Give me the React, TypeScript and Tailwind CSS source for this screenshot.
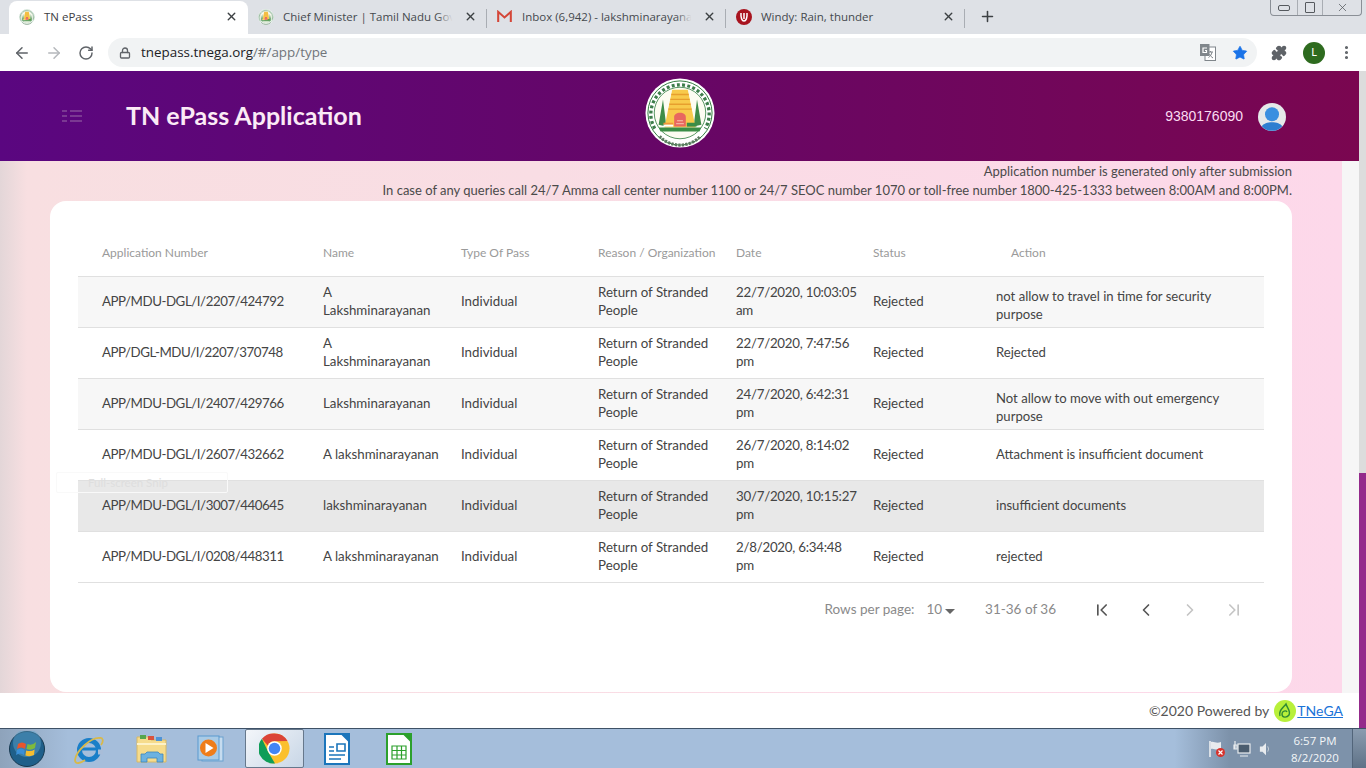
import React from 'react';
import { ArrowLeft, ArrowRight, ChevronFirst, ChevronLast, ChevronLeft, ChevronRight, Lock, MoreVertical, Plus, Puzzle, RotateCw, Star, X } from 'lucide-react';

const rows = [
	['APP/MDU-DGL/I/2207/424792', 'A\nLakshminarayanan', '22/7/2020, 10:03:05\nam', 'not allow to travel in time for security\npurpose'],
	['APP/DGL-MDU/I/2207/370748', 'A\nLakshminarayanan', '22/7/2020, 7:47:56\npm', 'Rejected'],
	['APP/MDU-DGL/I/2407/429766', 'Lakshminarayanan', '24/7/2020, 6:42:31\npm', 'Not allow to move with out emergency\npurpose'],
	['APP/MDU-DGL/I/2607/432662', 'A lakshminarayanan', '26/7/2020, 8:14:02\npm', 'Attachment is insufficient document'],
	['APP/MDU-DGL/I/3007/440645', 'lakshminarayanan', '30/7/2020, 10:15:27\npm', 'insufficient documents'],
	['APP/MDU-DGL/I/0208/448311', 'A lakshminarayanan', '2/8/2020, 6:34:48\npm', 'rejected'],
];

const cols = 'grid grid-cols-[221px_138px_137px_138px_137px_123px_1fr] pl-6 items-center';

const Seal: React.FC<{ className?: string }> = ({ className }) => (
	<svg viewBox="0 0 72 72" className={className}>
		<circle cx="36" cy="36" r="35.5" fill="#fff" />
		<circle cx="36" cy="36" r="33" fill="none" stroke="#2c7a3a" strokeWidth="1" />
		<path d="M10 52 A30 30 0 1 1 62 52" fill="none" stroke="#3d7d4a" strokeWidth="3.4" strokeDasharray="3 2.4" />
		<circle cx="36" cy="36" r="26.5" fill="#fdfcf2" stroke="#2c7a3a" strokeWidth="0.8" />
		<path d="M14 48 L18.5 22 L22 50 Z M58 48 L53.5 22 L50 50 Z" fill="#3f8c48" />
		<path d="M28 12 H44 L52 51 H20 Z" fill="#f8ca4c" />
		<path d="M27 17 H45 M26 22 H46 M25 27 H47 M24 32 H48" stroke="#e79f2e" strokeWidth="1.4" />
		<path d="M30 41 C29 34 43 34 42 41 L42 50 L30 50 Z" fill="#e8675f" />
		<path d="M33 44 H39 M32 47 H40" stroke="#f7c6b4" strokeWidth="1" />
		<path d="M14 51 H58 L56 55 H16 Z" fill="#3b8d46" />
		<path d="M19 46 H29 V48 H19 Z" fill="#f0963a" />
		<path d="M19 48 H29 V50 H19 Z" fill="#fff" />
		<path d="M43 46 H53 V50 H43 Z" fill="#3b8d46" />
		<path d="M15 60 A29 29 0 0 0 57 60" fill="none" stroke="#5c7a60" strokeWidth="3.2" strokeDasharray="2.4 1.2" />
	</svg>
);

const Tab: React.FC<{ icon: React.ReactNode; title: string; active?: boolean; fade?: boolean; sep?: boolean }> = ({ icon, title, active, fade, sep }) => (
	<div className={`relative flex h-[33px] w-[239px] items-center pb-[2px] pl-[10px] pr-[10px] text-[11.5px] ${active ? 'rounded-t-lg bg-white text-[#3c4043]' : 'text-[#45494e]'}`}>
		<div className="flex w-[25px] shrink-0 items-center">{icon}</div>
		<span className="min-w-0 flex-1 whitespace-nowrap">{title}</span>
		{fade && <span className="absolute right-[24px] top-0 h-full w-[26px] bg-[linear-gradient(90deg,transparent,#dee1e6_60%)]" />}
		<X size={13} strokeWidth={2.6} className="relative ml-[8px] shrink-0 text-[#3c4043]" />
		{sep && <span className="absolute right-0 top-[8px] h-[19px] w-px bg-[#a9adb3]" />}
	</div>
);

const Gmail = () => (
	<svg viewBox="0 0 16 14" className="h-[13px] w-[15px]">
		<path d="M1.2 13 V2 L8 8 L14.8 2 V13" fill="none" stroke="#d44638" strokeWidth="2.2" />
	</svg>
);

const Windy = () => (
	<svg viewBox="0 0 16 16" className="h-[16px] w-[16px]">
		<circle cx="8" cy="8" r="8" fill="#a8141f" />
		<path d="M5 4 C4.6 9 6 12 8 12 C10 12 11.4 9 11 4 M8 4 V10" fill="none" stroke="#fff" strokeWidth="1.5" />
	</svg>
);

const Translate = () => (
	<svg viewBox="0 0 16 17" className="h-[17px] w-[16px]">
		<rect x="5" y="3" width="10.5" height="13.5" fill="#fff" stroke="#80868b" />
		<rect x="0" y="0" width="9.5" height="12" fill="#80868b" />
		<path d="M7 4 H3 V8.5 H6.5 V6.5 H5" fill="none" stroke="#fff" strokeWidth="1.2" />
		<path d="M8 8 H13 M10.5 7 V8 M12 8 C11.5 11 10 12.5 8.5 13.5 M9.5 10 C10 11.5 11.5 13 13 14" fill="none" stroke="#80868b" />
	</svg>
);

const ListIcon = () => (
	<svg viewBox="0 0 20 12" className="h-[12px] w-[20px]" stroke="#9a6aa8" strokeWidth="1">
		<path d="M0 1 H5 M8 1 H20 M0 6 H5 M8 6 H20 M0 11 H5 M8 11 H20" />
	</svg>
);

const Avatar = () => (
	<svg viewBox="0 0 30 30" className="h-[30px] w-[28px]">
		<circle cx="15" cy="15" r="15" fill="#e6e9ea" />
		<circle cx="15" cy="12" r="7.5" fill="#3a8fe0" />
		<path d="M4 25 C7 19 23 19 26 25 A15 15 0 0 1 4 25 Z" fill="#2f7fd0" />
	</svg>
);

const TnegaLogo = () => (
	<svg viewBox="0 0 22 22" className="h-[22px] w-[22px]">
		<circle cx="11" cy="11" r="11" fill="#b8f03a" />
		<path d="M6 16 C4 11 9 8 12 4 C13 8 17 11 15 15 C13 18 8 18 8 14 C8 11 12 10 13 12" fill="none" stroke="#2f8a34" strokeWidth="1.4" />
	</svg>
);

const Orb = () => (
	<svg viewBox="0 0 36 36" className="h-[36px] w-[36px]">
		<circle cx="18" cy="18" r="17.5" fill="#1f5f8a" stroke="#17384f" />
		<circle cx="18" cy="12" r="14" fill="#5fa7cf" opacity="0.45" />
		<path d="M9 13 Q13 10 17 13 L16 18 Q12 15 8 18 Z" fill="#e8552c" />
		<path d="M18.5 13 Q23 15 27 11 L26 17 Q22 20 17.5 18 Z" fill="#7fba3c" />
		<path d="M8 19 Q12 16 15.6 19 L15 24 Q11 21 7 24 Z" fill="#3a8fd8" />
		<path d="M17.2 19.5 Q22 21 25.6 18.5 L25 24 Q21 26 16.4 24.5 Z" fill="#f5bd2f" />
	</svg>
);

const IeIcon = () => (
	<svg viewBox="0 0 32 32" className="h-[32px] w-[32px]">
		<circle cx="16" cy="17" r="9.5" fill="none" stroke="#1a7fc8" strokeWidth="5" />
		<path d="M9 16 H24" stroke="#1a7fc8" strokeWidth="3" />
		<path d="M25 19 L30 19" stroke="#a8bdd8" strokeWidth="5" />
		<path d="M27 5 C18 4 3 18 2 27 C2 32 8 30 12 27 M26 5 C30 4 31 8 28 12" fill="none" stroke="#d8b94a" strokeWidth="1.8" />
	</svg>
);

const FolderIcon = () => (
	<svg viewBox="0 0 32 30" className="h-[30px] w-[32px]">
		<path d="M1 3 H13 L15 6 H30 V28 H1 Z" fill="#f6dc8c" stroke="#d6b866" />
		<path d="M4 1 H10 V5 H4 Z" fill="#56a64d" />
		<path d="M12 2 H18 V6 H12 Z" fill="#d9533c" />
		<path d="M20 3 H26 V7 H20 Z" fill="#4e93d6" />
		<path d="M1 10 H30" stroke="#fdf2c8" strokeWidth="2" />
		<path d="M5 28 V20 H9 L11 18 H22 L24 20 H27 V28 H21 V24 H11 V28 Z" fill="#6cb2e0" stroke="#3d85bd" strokeWidth="0.8" />
	</svg>
);

const MediaIcon = () => (
	<svg viewBox="0 0 30 28" className="h-[28px] w-[30px]">
		<rect x="5" y="2" width="21" height="24" fill="#c6dcef" stroke="#6ba1cf" />
		<rect x="1" y="1" width="21" height="24" fill="#a9cbe6" stroke="#5a9ad0" />
		<circle cx="11.5" cy="13" r="8.5" fill="#ef7d1a" />
		<path d="M8.5 8 L16.5 13 L8.5 18 Z" fill="#fff" />
	</svg>
);

const ChromeIcon = () => (
	<svg viewBox="0 0 32 32" className="h-[31px] w-[31px]">
		<circle cx="16" cy="16" r="15.5" fill="#fbc02d" />
		<path d="M16 .5 A15.5 15.5 0 0 1 29.4 8.2 L16 8.5 A7.5 7.5 0 0 0 9 13 L3 6 A15.5 15.5 0 0 1 16 .5 Z" fill="#db4437" />
		<path d="M3 6 L9.5 19.7 L16.5 31.5 A15.5 15.5 0 0 1 3 6 Z" fill="#0f9d58" />
		<circle cx="16" cy="16" r="7.5" fill="#fff" />
		<circle cx="16" cy="16" r="6" fill="#4285f4" />
	</svg>
);

const DocIcon: React.FC<{ color: string; calc?: boolean }> = ({ color, calc }) => (
	<svg viewBox="0 0 26 32" className="h-[32px] w-[26px]">
		<path d="M1 1 H18 L25 8 V31 H1 Z" fill="#fff" stroke={color} strokeWidth="2" />
		<path d="M17 0 H26 V9 Z" fill={color} />
		{calc ? (
			<path d="M6 13 H20 V26 H6 Z M6 17.5 H20 M6 22 H20 M11 13 V26 M15.5 13 V26" fill="none" stroke={color} strokeWidth="1.2" />
		) : (
			<path d="M5 14 H10 M5 18 H10 M5 22 H21 M5 26 H17 M13 11 H21 V18 H13 Z" fill="none" stroke={color} strokeWidth="1.6" />
		)}
	</svg>
);

const TrayFlag = () => (
	<svg viewBox="0 0 18 18" className="h-[18px] w-[18px]">
		<path d="M2 1 V17" stroke="#f4f4f4" strokeWidth="1.5" />
		<path d="M3 2 C6 1 8 4 13 2 V9 C8 11 6 8 3 9 Z" fill="#e8ebee" />
		<circle cx="12.5" cy="12.5" r="4.5" fill="#d8322c" />
		<path d="M10.5 10.5 L14.5 14.5 M14.5 10.5 L10.5 14.5" stroke="#fff" strokeWidth="1.2" />
	</svg>
);

const TrayNet = () => (
	<svg viewBox="0 0 18 18" className="h-[18px] w-[18px]" fill="none" stroke="#e8ebee" strokeWidth="1.2">
		<rect x="5" y="4" width="12" height="9" fill="#4b5d6f" />
		<path d="M2 1 V9 M1 5 H4 V9 H1 Z M7 16 H15" />
	</svg>
);

const TraySound = () => (
	<svg viewBox="0 0 16 16" className="h-[16px] w-[14px]" fill="#e8ebee">
		<path d="M1 5 H4 L8 1 V15 L4 11 H1 Z" />
		<path d="M10 5 Q12 8 10 11" fill="none" stroke="#cdd5dc" />
	</svg>
);

const App: React.FC = () => {
	return (
		<div className="flex h-screen w-full flex-col overflow-hidden bg-white font-['Lato',sans-serif]">
			{/* Tab strip */}
			<div className="relative flex h-[34px] shrink-0 items-end bg-[#dee1e6] pl-[9px] font-['Open_Sans',sans-serif]">
				<Tab active icon={<Seal className="h-[16px] w-[16px]" />} title="TN ePass" />
				<Tab fade sep icon={<Seal className="h-[16px] w-[16px]" />} title="Chief Minister | Tamil Nadu Gove" />
				<Tab fade sep icon={<Gmail />} title="Inbox (6,942) - lakshminarayanan" />
				<Tab sep icon={<Windy />} title="Windy: Rain, thunder" />
				<Plus size={17} strokeWidth={2.2} className="mb-[9px] ml-[14px] text-[#3c4043]" />
				<div className="absolute right-[4px] top-0 flex h-[16px] w-[92px] rounded-b-[4px] border border-t-0 border-[#8a8f96] text-[#55595e]">
					<div className="flex w-[27px] items-center justify-center border-r border-[#a9adb3]">
						<span className="h-[6px] w-[12px] rounded-[2px] border border-[#55595e]" />
					</div>
					<div className="flex w-[25px] items-center justify-center border-r border-[#a9adb3]">
						<span className="h-[11px] w-[10px] rounded-[1px] border border-[#55595e]" />
					</div>
					<div className="flex flex-1 items-center justify-center">
						<X size={13} strokeWidth={1.4} />
					</div>
				</div>
			</div>

			{/* Toolbar */}
			<div className="flex h-[37px] shrink-0 items-center bg-white pl-[13px] pr-[11px]">
				<ArrowLeft size={18} strokeWidth={2} className="text-[#5f6368]" />
				<ArrowRight size={18} strokeWidth={2} className="ml-[14px] text-[#b5b8bc]" />
				<RotateCw size={16} strokeWidth={2.2} className="ml-[15px] text-[#5f6368]" />
				<div className="ml-[14px] flex h-[29px] w-[1149px] items-center rounded-full bg-[#f1f3f4] pl-[11px] pr-[9px] font-['Open_Sans',sans-serif] text-[13.4px]">
					<Lock size={12} strokeWidth={2.6} className="text-[#5f6368]" />
					<span className="ml-[10px] text-[#202124]">tnepass.tnega.org</span>
					<span className="text-[#70757a]">/#/app/type</span>
					<div className="ml-auto flex items-center gap-[16px]">
						<Translate />
						<Star size={16} fill="#1a73e8" strokeWidth={1} className="text-[#1a73e8]" />
					</div>
				</div>
				<Puzzle size={16} fill="#5f6368" className="ml-[14px] text-[#5f6368]" />
				<div className="ml-[16px] flex h-[22px] w-[22px] items-center justify-center rounded-full bg-[#2e6b1f] text-[11px] text-white">L</div>
				<MoreVertical size={17} strokeWidth={2.4} className="ml-[13px] text-[#5f6368]" />
			</div>

			{/* Page viewport */}
			<div className="flex min-h-0 flex-1">
				<div className="flex min-w-0 flex-1 flex-col">
					<header className="flex h-[90px] shrink-0 items-center bg-[linear-gradient(90deg,#5a0680,#650668_45%,#7a0650)] pl-[62px] pr-[73px]">
						<ListIcon />
						<h1 className="ml-[44px] w-[237px] whitespace-nowrap text-[25px] font-bold text-[#fbeaf6]">TN ePass Application</h1>
						<div className="-mt-[7px] ml-[282px] h-[72px] w-[70px]">
							<Seal className="h-[72px] w-[70px]" />
						</div>
						<span className="ml-auto font-['Liberation_Sans',sans-serif] text-[14px] text-[#fbdcf2]">9380176090</span>
						<div className="ml-[15px] mt-[1px]">
							<Avatar />
						</div>
					</header>

					<div className="relative flex min-h-0 flex-1">
						<main className="min-w-0 flex-1 bg-[linear-gradient(90deg,#e3d6d8,#f8dfe1_2%,#f9dde4_40%,#fdd8ea)] pl-[50px] pr-[50px]">
							<div className="flex h-[40px] flex-col items-end pt-px text-[13px] leading-[19px] text-[#4a4a4a]">
								<p>Application number is generated only after submission</p>
								<p>In case of any queries call 24/7 Amma call center number 1100 or 24/7 SEOC number 1070 or toll-free number 1800-425-1333 between 8:00AM and 8:00PM.</p>
							</div>
							<section className="h-[491px] rounded-2xl bg-white px-[28px] pt-[28px]">
								<div className={`${cols} h-[48px] border-b border-[#e0e0e0] text-[12px] text-[#9a9a9a]`}>
									<span>Application Number</span>
									<span>Name</span>
									<span>Type Of Pass</span>
									<span>Reason / Organization</span>
									<span>Date</span>
									<span>Status</span>
									<span className="pl-[15px]">Action</span>
								</div>
								{rows.map((row, i) => (
									<div
										key={row[0]}
										className={`${cols} h-[51px] border-b border-[#e0e0e0] pb-[2px] text-[13.3px] leading-[18px] text-[#444] ${i === 4 ? 'bg-[#e8e8e8]' : i % 2 === 0 ? 'bg-[#f7f7f7]' : 'bg-white'}`}
									>
										<span className="tracking-[-0.45px]">{row[0]}</span>
										<span className="whitespace-pre-line">{row[1]}</span>
										<span>Individual</span>
										<span className="whitespace-pre-line">{'Return of Stranded\nPeople'}</span>
										<span className="whitespace-pre-line tracking-[-0.25px]">{row[2]}</span>
										<span>Rejected</span>
										<span className={`whitespace-pre-line text-[13.1px] ${row[3].includes('\n') ? 'mt-[8px]' : ''}`}>{row[3]}</span>
									</div>
								))}
								<div className="flex h-[54px] items-center justify-end pr-[20px] text-[13.5px] text-[#8a8a8a]">
									<span className="mb-[2px]">Rows per page:</span>
									<span className="mb-[2px] ml-[12px]">10</span>
									<span className="ml-[3px] mt-[2px] h-0 w-0 border-x-[5px] border-t-[5px] border-x-transparent border-t-[#666]" />
									<span className="mb-[2px] ml-[30px] mr-[36px]">31-36 of 36</span>
									<div className="flex items-center gap-[24px]">
										<ChevronFirst size={20} className="text-[#555]" />
										<ChevronLeft size={20} className="text-[#555]" />
										<ChevronRight size={20} className="text-[#c4c4c4]" />
										<ChevronLast size={20} className="text-[#c4c4c4]" />
									</div>
								</div>
							</section>
						</main>
						<div className="w-[17px] shrink-0 bg-[#f6f6f6]" />
						{/* Ghost of the snipping tool label */}
						<div className="absolute left-[56px] top-[311px] flex h-[21px] w-[172px] items-center rounded-[2px] border border-[#f9f9f9] pl-[31px] text-[11.5px] text-[#dedede]">
							Full-screen Snip
						</div>
					</div>

					<footer className="flex h-[35px] shrink-0 items-center justify-end bg-white pr-[16px] text-[14px] text-[#555]">
						<span>©2020 Powered by</span>
						<span className="ml-[5px]">
							<TnegaLogo />
						</span>
						<a className="ml-px text-[#1a73d8] underline">TNeGA</a>
					</footer>
				</div>
				<div className="flex w-[7px] shrink-0 flex-col">
					<div className="h-[402px] bg-[#dcdcdc]" />
					<div className="flex-1 bg-[#932a8b]" />
				</div>
			</div>

			{/* Windows taskbar */}
			<div className="relative flex h-[40px] shrink-0 items-center border-t border-[#3e5166] bg-[linear-gradient(90deg,#8ea3bb,#a5bedb_5%,#a5bedb_86%,#7d92aa_90%,#7d92aa)]">
				<div className="ml-[9px] flex items-center">
					<Orb />
				</div>
				<div className="ml-[28px]"><IeIcon /></div>
				<div className="ml-[31px]"><FolderIcon /></div>
				<div className="ml-[29px]"><MediaIcon /></div>
				<div className="ml-[18px] flex h-[39px] w-[59px] items-center justify-center rounded-[2px] border border-[#66788c] bg-[linear-gradient(135deg,#f3f6fa,#c8d6e6)]">
					<ChromeIcon />
				</div>
				<div className="ml-[20px]"><DocIcon color="#1b75bb" /></div>
				<div className="ml-[36px]"><DocIcon color="#2ca02c" calc /></div>
				<div className="ml-auto flex items-center">
					<TrayFlag />
					<div className="ml-[7px]"><TrayNet /></div>
					<div className="ml-[8px]"><TraySound /></div>
					<div className="ml-[12px] w-[60px] text-center font-['Open_Sans',sans-serif] text-[11.5px] leading-[17px] text-[#f4f6f8]">
						<div>6:57 PM</div>
						<div>8/2/2020</div>
					</div>
					<div className="ml-[7px] h-[39px] w-[14px] border-l border-[#52657a] bg-[linear-gradient(180deg,#8a9cb0,#5f7287)]" />
				</div>
			</div>
		</div>
	);
};

export default App;
